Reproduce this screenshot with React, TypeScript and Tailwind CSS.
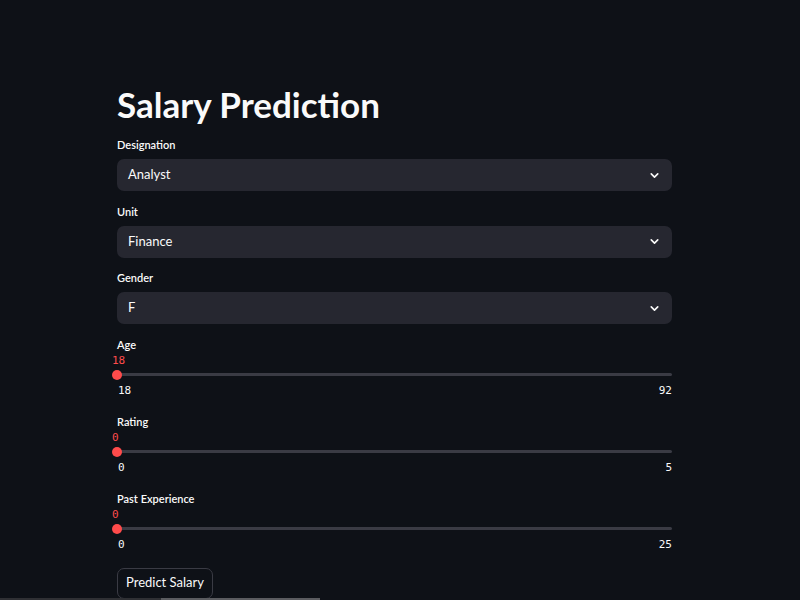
import { ChevronDown } from "lucide-react";

const selects = [
  { label: "Designation", value: "Analyst" },
  { label: "Unit", value: "Finance" },
  { label: "Gender", value: "F" },
];

const sliders = [
  { label: "Age", value: "18", min: "18", max: "92" },
  { label: "Rating", value: "0", min: "0", max: "5" },
  { label: "Past Experience", value: "0", min: "0", max: "25" },
];

function SelectBox({ label, value }: { label: string; value: string }) {
  return (
    <div className="mb-[13.5px]">
      <div className="text-[11px] leading-[14px] text-[#fafafa] mb-[7px] font-semibold">{label}</div>
      <div className="h-[32px] rounded-[7px] bg-[#262730] flex items-center justify-between pl-[11px] pr-[11px]">
        <span className="text-[13px] text-[#fafafa]">{value}</span>
        <ChevronDown size={13} strokeWidth={3} className="text-[#fafafa]" />
      </div>
    </div>
  );
}

function Slider({ label, value, min, max }: { label: string; value: string; min: string; max: string }) {
  return (
    <div className="mb-[17px]">
      <div className="text-[11px] leading-[14px] text-[#fafafa] mb-[2px] font-semibold">{label}</div>
      <div className="font-['DejaVu_Sans_Mono',monospace] text-[11px] leading-[14px] text-[#ff4b4b] -ml-[5px]">{value}</div>
      <div className="relative h-[14px] flex items-center">
        <div className="h-[3px] w-full rounded bg-[#3a3b44]" />
        <div className="absolute -left-[5px] top-[2px] h-[10px] w-[10px] rounded-full bg-[#ff4b4b]" />
      </div>
      <div className="flex justify-between font-['DejaVu_Sans_Mono',monospace] text-[11px] leading-[14px] text-[#fafafa] mt-[2px]">
        <span className="pl-[1px]">{min}</span>
        <span>{max}</span>
      </div>
    </div>
  );
}

export default function App() {
  return (
    <div className="relative h-[600px] w-[800px] overflow-hidden bg-[#0e1117] font-['Lato','Noto_Sans',sans-serif]">
      <div className="ml-[117px] w-[555px] pt-[82px]">
        <h1 className="text-[35px] leading-[44px] font-bold text-[#fafafa] mb-[12px]">Salary Prediction</h1>
        {selects.map((s, i) => (
          <SelectBox key={i} label={s.label} value={s.value} />
        ))}
        {sliders.map((s, i) => (
          <Slider key={i} {...s} />
        ))}
        <button className="-mt-[1px] h-[31px] px-[8px] rounded-[7px] border border-[#3a3b44] bg-[#0e1117] text-[13px] text-[#fafafa]">
          Predict Salary
        </button>
      </div>
      <div className="absolute bottom-0 left-0 flex h-[2px] w-[320px]">
        <div className="w-[161px] bg-[#2f3034]" />
        <div className="flex-1 bg-[#5b5c60]" />
      </div>
    </div>
  );
}
